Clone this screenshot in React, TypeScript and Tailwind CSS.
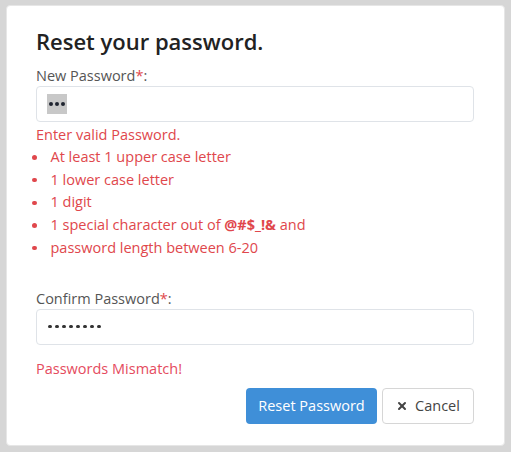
import { X } from 'lucide-react';

const rules = [
  'At least 1 upper case letter',
  '1 lower case letter',
  '1 digit',
  null,
  'password length between 6-20',
];

function Dots({ n, size, pitch, color }: { n: number; size: number; pitch: number; color: string }) {
  return (
    <span className="flex items-center">
      {Array.from({ length: n }).map((_, i) => (
        <span
          key={i}
          className="rounded-full"
          style={{ width: size, height: size, marginRight: pitch - size, background: color }}
        />
      ))}
    </span>
  );
}

export default function App() {
  return (
    <div className="h-[452px] w-[511px] bg-[#d6d6d6] p-[5px] pl-[6px] font-['Open_Sans',sans-serif]">
      <div className="h-[441px] w-[499px] rounded-[4px] border border-[#e6e6e6] bg-white pl-[29px] pr-[30px]">
        <h1 className="mt-[20px] text-[22px] font-semibold leading-[30px] text-[#222]">
          Reset your password.
        </h1>

        <label className="mt-[10px] block text-[14.5px] leading-[20px] text-[#555]">
          New Password<span className="text-[#e0474c]">*</span>:
        </label>
        <div className="flex h-[36px] items-center rounded-[4px] border border-[#dfe3e8] px-[10px]">
          <span className="flex h-[20px] w-[20px] items-center justify-center bg-[#c8c8c8] pl-[2px]">
            <Dots n={3} size={3.5} pitch={6} color="#1f2430" />
          </span>
        </div>

        <p className="mt-[2px] text-[14.5px] leading-[22px] text-[#e0474c]">Enter valid Password.</p>
        <ul className="text-[14.5px] leading-[22.7px] text-[#e0474c]">
          {rules.map((r, i) => (
            <li key={i} className="flex items-center">
              <span className="ml-[-4px] mr-[14px] h-[4.5px] w-[4.5px] rounded-full bg-[#e0474c]" />
              {r ?? (
                <span>
                  1 special character out of <b className="font-bold">@#$_!&amp;</b> and
                </span>
              )}
            </li>
          ))}
        </ul>

        <label className="mt-[29px] block text-[14.5px] leading-[20px] text-[#555]">
          Confirm Password<span className="text-[#e0474c]">*</span>:
        </label>
        <div className="flex h-[36px] items-center rounded-[4px] border border-[#dfe3e8] px-[11px]">
          <Dots n={8} size={3.5} pitch={7} color="#333" />
        </div>

        <p className="mt-[14px] text-[14.5px] leading-[20px] text-[#e54b5e]">Passwords Mismatch!</p>

        <div className="mt-[9px] flex justify-end gap-[5px]">
          <button className="h-[36px] w-[131px] rounded-[4px] bg-[#3f8fd8] text-[14.5px] text-white">
            Reset Password
          </button>
          <button className="flex h-[36px] w-[92px] items-center justify-center gap-[7px] rounded-[4px] border border-[#d6d6d6] bg-white text-[14.5px] text-[#444]">
            <X size={12} strokeWidth={4} className="text-[#444]" />
            Cancel
          </button>
        </div>
      </div>
    </div>
  );
}
